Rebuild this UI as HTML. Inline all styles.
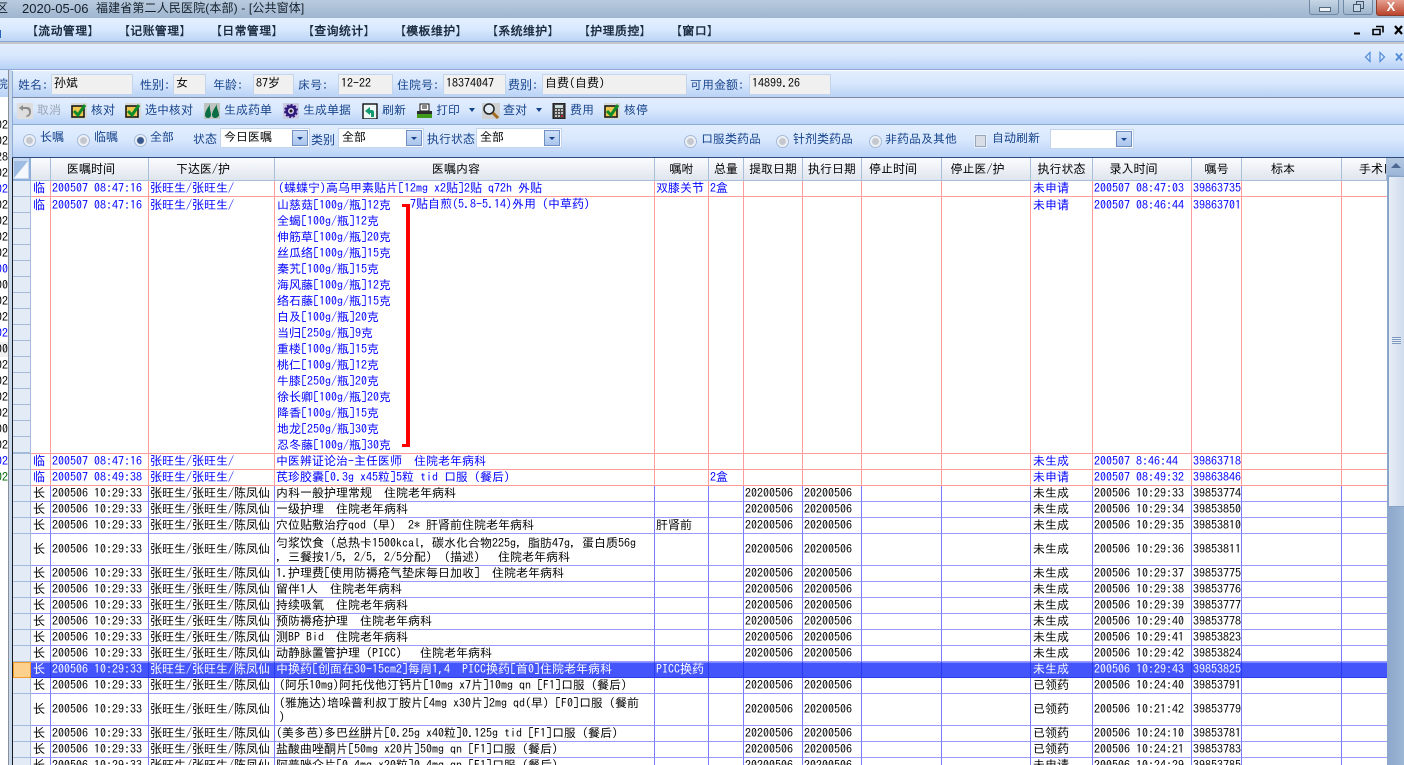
<!DOCTYPE html>
<html lang="zh"><head><meta charset="utf-8"><title>医嘱</title>
<style>
html,body{margin:0;padding:0;width:1404px;height:765px;overflow:hidden;background:#fff}
body{position:relative;font:12px/15px "WenQuanYi Zen Hei Mono","IPAGothic","WenQuanYi Zen Hei","Noto Sans CJK SC",monospace;color:#000}
.a{position:absolute;white-space:pre}
.band{position:absolute;background:linear-gradient(#e2eefe,#d9e8fd 45%,#b8d2f6)}
.l{position:absolute;white-space:pre;color:#15428b;line-height:15px}
.v{position:absolute;top:74px;height:19px;background:#f0f0f0;border:1px solid #c3d5ec;padding-left:2px;line-height:17px;white-space:pre;box-sizing:content-box}
.m{position:absolute;top:24px;white-space:pre;font-weight:bold;color:#1c2c40;letter-spacing:.3px}
.ic{position:absolute;top:103px;width:16px;height:16px}
.dd{position:absolute;top:108px;left:0;width:0;height:0;border:3px solid transparent;border-top:4px solid #15428b;border-bottom:0}
.r{position:absolute;width:11px;height:11px;border:1px solid #a6bad6;border-radius:50%;background:radial-gradient(circle,#c4c8ce 0 3px,#eef2f7 4px)}
.r.on{background:radial-gradient(circle,#37578e 0 3px,#eef2f7 4px)}
.c{position:absolute;height:18px;background:#fff;border:1px solid #c3d6ee;line-height:17px;padding-left:3px;white-space:pre;box-sizing:content-box}
.c i{position:absolute;right:1px;top:1px;width:14px;height:14px;background:linear-gradient(#cfe0f8,#a9c4ec);border:1px solid #6e8fc0}
.c i:after{content:"";position:absolute;left:4px;top:6px;border:3px solid transparent;border-top:3px solid #15428b;border-bottom:0}
table{position:absolute;left:13px;top:158px;width:1374px;table-layout:fixed;border-collapse:separate;border-spacing:0}
td,th{padding:0 0 0 1px;margin:0;box-sizing:border-box;overflow:hidden;white-space:pre;height:16px;line-height:15px;font-weight:normal;text-align:left;vertical-align:middle}
th{height:22px;background:linear-gradient(#fbfcfe,#dfe5ee);border-right:1px solid #a9bfd9;border-bottom:1px solid #a9bfd9;text-align:center;padding:0}
th.s{padding-right:17px}
td.h{background:#e3ebf6;border-right:1px solid #a4bcd9;border-bottom:1px solid #a4bcd9;padding:0}
td.t{padding-left:2px}
.b td{border-right:1px solid #7a7aff;border-bottom:1px solid #9a9aff}
.q td{color:#0000ff;border-right:1px solid #ff9c9c;border-bottom:1px solid #ff9c9c}
.b td.h,.q td.h{border-right:1px solid #a4bcd9;border-bottom:1px solid #a4bcd9;color:#000}
.sel td{background:#4455fb;color:#fff;border-right:1px solid #2a3af0;border-bottom:1px solid #2a3af0;box-shadow:inset 0 1px 0 #7f8cff}
.sel td.h{background:#fdd08c;border:1px solid #f09a30;box-shadow:none}
tr td:last-child{border-right:0 !important}
.two{line-height:14px}
.ln{line-height:16px;vertical-align:top}
.n{position:absolute;left:-6px;width:14px;text-align:right;overflow:hidden;white-space:pre;line-height:14px}
.tt{position:absolute;white-space:pre;top:1px;font-family:'Liberation Sans','WenQuanYi Zen Hei',sans-serif;color:#15202c;font-size:12px;line-height:15px}
</style></head><body>

<!-- title bar -->
<div class="a" style="left:0;top:0;width:1404px;height:18px;background:linear-gradient(#b9cbde,#9fb6cf)"></div>
<div class="tt" style="left:-4px">区</div>
<div class="tt" style="left:22px;font-size:13px">2020-05-06</div>
<div class="tt" style="left:96px;letter-spacing:.14px">福建省第二人民医院(本部) - [公共窗体]</div>
<div class="a" style="left:1309px;top:0;width:28px;height:14px;border:1px solid #6f88a6;border-top:0;border-radius:0 0 3px 3px;background:linear-gradient(#c6d6e6,#9fb5cc)"><div class="a" style="left:9px;top:7px;width:10px;height:3px;background:#eef3f8;border:1px solid #55687e"></div></div>
<div class="a" style="left:1343px;top:0;width:28px;height:14px;border:1px solid #6f88a6;border-top:0;border-radius:0 0 3px 3px;background:linear-gradient(#c6d6e6,#9fb5cc)"><div class="a" style="left:12px;top:1px;width:6px;height:6px;border:1px solid #44566c"></div><div class="a" style="left:9px;top:4px;width:6px;height:6px;border:1px solid #44566c;background:#c6d6e6"></div></div>
<div class="a" style="left:1376px;top:0;width:28px;height:15px;border-left:1px solid #8a3d2c;border-bottom:1px solid #8a3d2c;border-radius:0 0 0 3px;background:linear-gradient(#e6a090,#b9442c);color:#fff;font:bold 13px/13px 'Liberation Sans',sans-serif;text-align:center">X</div>

<!-- menu bar -->
<div class="a" style="left:0;top:18px;width:1404px;height:23px;background:linear-gradient(#e4f0ff,#d8e8fd 50%,#bcd5f6)"></div>
<div class="a" style="left:0;top:41px;width:1404px;height:1px;background:#88a8d2"></div>
<div class="a" style="left:0;top:42px;width:1404px;height:2px;background:#c4c6ca"></div>
<div class="m" style="left:26px">【流动管理】</div>
<div class="m" style="left:118px">【记账管理】</div>
<div class="m" style="left:210px">【日常管理】</div>
<div class="m" style="left:302px">【查询统计】</div>
<div class="m" style="left:394px">【模板维护】</div>
<div class="m" style="left:486px">【系统维护】</div>
<div class="m" style="left:578px">【护理质控】</div>
<div class="m" style="left:670px">【窗口】</div>
<div class="a" style="left:0;top:30px;width:1px;height:8px;background:#2a66b8"></div>
<svg class="a" style="left:1350px;top:24px" width="54" height="14" viewBox="0 0 54 14"><path d="M4 9.500h6" stroke="#000" stroke-width="2"/><path d="M26 2.500h7v6M23 5.500h7v5h-7z" fill="none" stroke="#000" stroke-width="1.600"/><path d="M45 2l7 8M52 2l-7 8" stroke="#000" stroke-width="2.200"/></svg>

<!-- tab band -->
<div class="band" style="left:0;top:44px;width:1404px;height:25px"></div>
<div class="a" style="left:0;top:69px;width:1404px;height:1px;background:#8eaad2"></div>
<svg class="a" style="left:1362px;top:50px" width="42" height="14" viewBox="0 0 42 14"><path d="M8 2.500L3.500 7 8 11.500z" fill="none" stroke="#4f8ad8" stroke-width="1.200"/><path d="M18 2.500L22.500 7 18 11.500z" fill="none" stroke="#4f8ad8" stroke-width="1.200"/><path d="M34 3.500l6 7M40 3.500l-6 7" stroke="#4f8ad8" stroke-width="1.800"/></svg>

<!-- left strip -->
<div class="band" style="left:0;top:70px;width:8px;height:27px"></div>
<div class="a" style="left:0;top:97px;width:8px;height:668px;background:#fff"></div>
<div class="a" style="left:8px;top:70px;width:1px;height:695px;background:#8c8f96"></div>
<div class="a" style="left:9px;top:70px;width:3px;height:695px;background:#c6d8ee"></div>
<div class="a" style="left:12px;top:158px;width:1px;height:607px;background:#1a1a1a"></div>
<div class="l" style="left:-4px;top:77px;width:12px;overflow:hidden;text-align:right">院</div>
<div class="a" style="left:0;top:342px;width:8px;height:15px;background:#f0f0f0"></div>
<div class="n" style="top:118px">02</div><div class="n" style="top:134px">02</div><div class="n" style="top:150px">28</div><div class="n" style="top:166px">02</div><div class="n" style="top:182px;color:#00f">02</div><div class="n" style="top:198px">02</div><div class="n" style="top:214px">02</div><div class="n" style="top:230px">02</div><div class="n" style="top:246px">02</div><div class="n" style="top:262px;color:#00f">00</div><div class="n" style="top:278px">00</div><div class="n" style="top:294px">02</div><div class="n" style="top:310px">02</div><div class="n" style="top:326px;color:#00f">02</div><div class="n" style="top:342px">00</div><div class="n" style="top:358px">02</div><div class="n" style="top:374px">02</div><div class="n" style="top:390px">02</div><div class="n" style="top:406px">02</div><div class="n" style="top:422px">00</div><div class="n" style="top:438px">02</div><div class="n" style="top:454px;color:#00f">02</div><div class="n" style="top:470px;color:#060">02</div>

<!-- patient panel -->
<div class="band" style="left:12px;top:71px;width:1392px;height:26px;border-left:1px solid #8eaad2"></div>
<div class="a" style="left:12px;top:97px;width:1392px;height:1px;background:#7f8a9c"></div>
<div class="l" style="left:18px;top:78px">姓名:</div><div class="v" style="left:51px;width:78px">孙斌</div>
<div class="l" style="left:140px;top:78px">性别:</div><div class="v" style="left:173px;width:29px">女</div>
<div class="l" style="left:213px;top:78px">年龄:</div><div class="v" style="left:253px;width:37px">87岁</div>
<div class="l" style="left:298px;top:78px">床号:</div><div class="v" style="left:338px;width:51px">12-22</div>
<div class="l" style="left:397px;top:78px">住院号:</div><div class="v" style="left:443px;width:59px">18374047</div>
<div class="l" style="left:508px;top:78px">费别:</div><div class="v" style="left:542px;width:141px">自费(自费)</div>
<div class="l" style="left:690px;top:78px">可用金额:</div><div class="v" style="left:749px;width:78px">14899.26</div>

<!-- toolbar -->
<div class="band" style="left:12px;top:98px;width:1392px;height:26px;border-left:1px solid #8eaad2"></div>
<div class="a" style="left:12px;top:124px;width:1392px;height:1px;background:#8eaad2"></div>
<svg class="ic" style="left:17px" viewBox="0 0 16 16"><rect width="16" height="16" fill="#dedede"/><path d="M2 5l4-3v2h4c3 0 4 2 4 5s-2 5-5 5l1-2c2 0 2-2 2-3s-1-3-3-3H6v2z" fill="#8c8c8c"/></svg>
<div class="l" style="left:37px;top:103px;color:#9aa6b6">取消</div>
<svg class="ic" style="left:71px" viewBox="0 0 16 16"><rect width="16" height="16" fill="#d6d8d4"/><rect x="1" y="3" width="12" height="11" fill="#f0c850" stroke="#1a1a1a" stroke-width="1.600"/><path d="M3 8l4 4 7-10" fill="none" stroke="#0f8a28" stroke-width="3"/></svg>
<div class="l" style="left:91px;top:103px">核对</div>
<svg class="ic" style="left:125px" viewBox="0 0 16 16"><rect width="16" height="16" fill="#d6d8d4"/><rect x="1" y="3" width="12" height="11" fill="#f0c850" stroke="#1a1a1a" stroke-width="1.600"/><path d="M3 8l4 4 7-10" fill="none" stroke="#0f8a28" stroke-width="3"/></svg>
<div class="l" style="left:145px;top:103px">选中核对</div>
<svg class="ic" style="left:204px" viewBox="0 0 16 16"><rect width="16" height="16" fill="#bfc4c0"/><path d="M6 1C4 5 1 8 1 12c0 2 2 3 3 3s3-1 3-3c0-4-2-7-1-11zM13 1c-2 4-5 7-5 11 0 2 2 3 3 3s4-1 4-3c0-4-3-7-2-11z" fill="#0a6e44"/></svg>
<div class="l" style="left:224px;top:103px">生成药单</div>
<svg class="ic" style="left:283px" viewBox="0 0 16 16"><rect width="16" height="16" fill="#c9cbe0"/><circle cx="8" cy="8" r="7" fill="#2e1a78"/><circle cx="8" cy="8" r="6.500" fill="none" stroke="#c9bcf0" stroke-width="1.600" stroke-dasharray="2 2"/><circle cx="8" cy="8" r="3" fill="#d8d0f0"/><circle cx="8" cy="8" r="1.500" fill="#222"/></svg>
<div class="l" style="left:303px;top:103px">生成单据</div>
<svg class="ic" style="left:362px" viewBox="0 0 16 16"><rect x="1" y="1" width="14" height="15" fill="#eef8f4" stroke="#111" stroke-width="1.400"/><path d="M12 14V9c0-1-1-2-2-2H8V4L3 8l5 4V10h1v4z" fill="#129a70"/></svg>
<div class="l" style="left:382px;top:103px">刷新</div>
<svg class="ic" style="left:416px" viewBox="0 0 16 16"><rect x="4" y="1" width="9" height="7" fill="#fff" stroke="#111"/><path d="M6 3h5M6 5h5" stroke="#111"/><rect x="1" y="8" width="15" height="6" fill="#2c2c2c"/><rect x="1" y="11" width="15" height="4" fill="#3f9a1c"/></svg>
<div class="l" style="left:436px;top:103px">打印</div>
<div class="dd" style="left:469px"></div>
<svg class="ic" style="left:482px;width:18px" viewBox="0 0 18 16"><rect width="18" height="16" fill="#ced0d2"/><circle cx="7" cy="6" r="5" fill="#dfeaf4" stroke="#222" stroke-width="1.500"/><path d="M11 10l5 5" stroke="#a36a1c" stroke-width="3"/></svg>
<div class="l" style="left:503px;top:103px">查对</div>
<div class="dd" style="left:536px"></div>
<svg class="ic" style="left:551px" viewBox="0 0 16 16"><rect x="2" y="0" width="12" height="16" fill="#444" stroke="#111"/><rect x="4" y="2" width="8" height="3" fill="#cdd"/><path d="M4 7h2M7 7h2M10 7h2M4 10h2M7 10h2M10 10h2M4 13h2M7 13h2" stroke="#eee" stroke-width="1.500"/><path d="M10 13h2" stroke="#d22" stroke-width="1.500"/></svg>
<div class="l" style="left:570px;top:103px">费用</div>
<svg class="ic" style="left:604px" viewBox="0 0 16 16"><rect width="16" height="16" fill="#d6d8d4"/><rect x="1" y="3" width="12" height="11" fill="#f0c850" stroke="#1a1a1a" stroke-width="1.600"/><path d="M3 8l4 4 7-10" fill="none" stroke="#0f8a28" stroke-width="3"/></svg>
<div class="l" style="left:624px;top:103px">核停</div>

<!-- filter -->
<div class="band" style="left:12px;top:125px;width:1392px;height:32px;border-left:1px solid #8eaad2"></div>
<div class="a" style="left:12px;top:157px;width:1392px;height:1px;background:#2c4a7c"></div>
<div class="r" style="left:23px;top:134px"></div><div class="l" style="left:40px;top:130px">长嘱</div>
<div class="r" style="left:77px;top:134px"></div><div class="l" style="left:94px;top:130px">临嘱</div>
<div class="r on" style="left:134px;top:134px"></div><div class="l" style="left:150px;top:130px">全部</div>
<div class="l" style="left:193px;top:132px">状态</div>
<div class="c" style="left:220px;top:128px;width:85px">今日医嘱<i></i></div>
<div class="l" style="left:311px;top:133px">类别</div>
<div class="c" style="left:338px;top:128px;width:81px">全部<i></i></div>
<div class="l" style="left:427px;top:132px">执行状态</div>
<div class="c" style="left:476px;top:128px;width:81px">全部<i></i></div>
<div class="r" style="left:684px;top:135px"></div><div class="l" style="left:701px;top:132px">口服类药品</div>
<div class="r" style="left:776px;top:135px"></div><div class="l" style="left:793px;top:132px">针剂类药品</div>
<div class="r" style="left:869px;top:135px"></div><div class="l" style="left:885px;top:132px">非药品及其他</div>
<div class="a" style="left:975px;top:135px;width:9px;height:10px;border:1px solid #98a8bc;background:#d9dee6;box-shadow:0 0 0 1px #e8f0fb"></div>
<div class="l" style="left:992px;top:131px">自动刷新</div>
<div class="c" style="left:1050px;top:129px;width:79px"><i></i></div>

<!-- grid -->
<table>
<colgroup><col style="width:18px"><col style="width:20px"><col style="width:98px"><col style="width:126px"><col style="width:380px"><col style="width:54px"><col style="width:35px"><col style="width:59px"><col style="width:59px"><col style="width:80px"><col style="width:89px"><col style="width:62px"><col style="width:99px"><col style="width:50px"><col style="width:100px"><col style="width:45px"></colgroup>
<tr style="height:23px"><th style="height:23px;background:#c9daf0;border:1px solid #8fb0d8;border-width:0 2px 2px 0"><svg width="16" height="21" viewBox="0 0 16 21" style="display:block"><path d="M1 20L15 3v17z" fill="#f4f7fb"/><path d="M1 3h14L1 20z" fill="#9fbce2"/></svg></th><th style="height:23px"></th><th class="s">医嘱时间</th><th class="s">下达医/护</th><th class="s">医嘱内容</th><th>嘱咐</th><th>总量</th><th>提取日期</th><th>执行日期</th><th class="s">停止时间</th><th class="s">停止医/护</th><th>执行状态</th><th class="s">录入时间</th><th>嘱号</th><th class="s">标本</th><th style="text-align:left;padding-left:17px">手术日</th></tr>
<tr class="q"><td class="h"></td><td class="t">临</td><td>200507 08:47:16</td><td>张旺生/张旺生/</td><td><span style="margin-left:2px">(蝶蝶宁)高乌甲素贴片[12mg x2贴]2贴 q72h 外贴</span></td><td>双膝关节</td><td>2盒</td><td></td><td></td><td></td><td></td><td class="t">未申请</td><td>200507 08:47:03</td><td>39863735</td><td></td><td></td></tr>
<tr class="q" style="height:256px"><td class="h" style="background:repeating-linear-gradient(#e3ebf6 0 15px,#a4bcd9 15px 16px)"></td><td class="t ln">临</td><td class="ln">200507 08:47:16</td><td class="ln">张旺生/张旺生/</td><td class="ln" style="padding-left:2px">山慈菇[100g/瓶]12克
全蝎[100g/瓶]12克
伸筋草[100g/瓶]20克
丝瓜络[100g/瓶]15克
秦艽[100g/瓶]15克
海风藤[100g/瓶]12克
络石藤[100g/瓶]15克
白及[100g/瓶]20克
当归[250g/瓶]9克
重楼[100g/瓶]15克
桃仁[100g/瓶]12克
牛膝[250g/瓶]20克
徐长卿[100g/瓶]20克
降香[100g/瓶]15克
地龙[250g/瓶]30克
忍冬藤[100g/瓶]30克</td><td></td><td></td><td></td><td></td><td></td><td></td><td class="t ln">未申请</td><td class="ln">200507 08:46:44</td><td class="ln">39863701</td><td></td><td></td></tr>
<tr class="q"><td class="h"></td><td class="t">临</td><td>200507 08:47:16</td><td>张旺生/张旺生/</td><td>中医辨证论治-主任医师  住院老年病科</td><td></td><td></td><td></td><td></td><td></td><td></td><td class="t">未生成</td><td>200507 8:46:44</td><td>39863718</td><td></td><td></td></tr>
<tr class="q"><td class="h"></td><td class="t">临</td><td>200507 08:49:38</td><td>张旺生/张旺生/</td><td>芪珍胶囊[0.3g x45粒]5粒 tid 口服（餐后）</td><td></td><td>2盒</td><td></td><td></td><td></td><td></td><td class="t">未申请</td><td>200507 08:49:32</td><td>39863846</td><td></td><td></td></tr>
<tr class="b"><td class="h"></td><td class="t">长</td><td>200506 10:29:33</td><td>张旺生/张旺生/陈凤仙</td><td>内科一般护理常规  住院老年病科</td><td></td><td></td><td>20200506</td><td>20200506</td><td></td><td></td><td class="t">未生成</td><td>200506 10:29:33</td><td>39853774</td><td></td><td></td></tr>
<tr class="b"><td class="h"></td><td class="t">长</td><td>200506 10:29:33</td><td>张旺生/张旺生/陈凤仙</td><td>一级护理  住院老年病科</td><td></td><td></td><td>20200506</td><td>20200506</td><td></td><td></td><td class="t">未生成</td><td>200506 10:29:34</td><td>39853850</td><td></td><td></td></tr>
<tr class="b"><td class="h"></td><td class="t">长</td><td>200506 10:29:33</td><td>张旺生/张旺生/陈凤仙</td><td>穴位贴敷治疗qod（早） 2* 肝肾前住院老年病科</td><td>肝肾前</td><td></td><td>20200506</td><td>20200506</td><td></td><td></td><td class="t">未生成</td><td>200506 10:29:35</td><td>39853810</td><td></td><td></td></tr>
<tr class="b" style="height:32px"><td class="h"></td><td class="t">长</td><td>200506 10:29:33</td><td>张旺生/张旺生/陈凤仙</td><td class="two">匀浆饮食（总热卡1500kcal，碳水化合物225g，脂肪47g，蛋白质56g
，三餐按1/5，2/5，2/5分配）（描述）  住院老年病科</td><td></td><td></td><td>20200506</td><td>20200506</td><td></td><td></td><td class="t">未生成</td><td>200506 10:29:36</td><td>39853811</td><td></td><td></td></tr>
<tr class="b"><td class="h"></td><td class="t">长</td><td>200506 10:29:33</td><td>张旺生/张旺生/陈凤仙</td><td>1.护理费[使用防褥疮气垫床每日加收]  住院老年病科</td><td></td><td></td><td>20200506</td><td>20200506</td><td></td><td></td><td class="t">未生成</td><td>200506 10:29:37</td><td>39853775</td><td></td><td></td></tr>
<tr class="b"><td class="h"></td><td class="t">长</td><td>200506 10:29:33</td><td>张旺生/张旺生/陈凤仙</td><td>留伴1人  住院老年病科</td><td></td><td></td><td>20200506</td><td>20200506</td><td></td><td></td><td class="t">未生成</td><td>200506 10:29:38</td><td>39853776</td><td></td><td></td></tr>
<tr class="b"><td class="h"></td><td class="t">长</td><td>200506 10:29:33</td><td>张旺生/张旺生/陈凤仙</td><td>持续吸氧  住院老年病科</td><td></td><td></td><td>20200506</td><td>20200506</td><td></td><td></td><td class="t">未生成</td><td>200506 10:29:39</td><td>39853777</td><td></td><td></td></tr>
<tr class="b"><td class="h"></td><td class="t">长</td><td>200506 10:29:33</td><td>张旺生/张旺生/陈凤仙</td><td>预防褥疮护理  住院老年病科</td><td></td><td></td><td>20200506</td><td>20200506</td><td></td><td></td><td class="t">未生成</td><td>200506 10:29:40</td><td>39853778</td><td></td><td></td></tr>
<tr class="b"><td class="h"></td><td class="t">长</td><td>200506 10:29:33</td><td>张旺生/张旺生/陈凤仙</td><td>测BP Bid  住院老年病科</td><td></td><td></td><td>20200506</td><td>20200506</td><td></td><td></td><td class="t">未生成</td><td>200506 10:29:41</td><td>39853823</td><td></td><td></td></tr>
<tr class="b"><td class="h"></td><td class="t">长</td><td>200506 10:29:33</td><td>张旺生/张旺生/陈凤仙</td><td>动静脉置管护理（PICC）  住院老年病科</td><td></td><td></td><td>20200506</td><td>20200506</td><td></td><td></td><td class="t">未生成</td><td>200506 10:29:42</td><td>39853824</td><td></td><td></td></tr>
<tr class="sel"><td class="h"></td><td class="t">长</td><td>200506 10:29:33</td><td>张旺生/张旺生/陈凤仙</td><td>中换药[创面在30-15cm2]每周1,4  PICC换药[首0]住院老年病科</td><td>PICC换药</td><td></td><td></td><td></td><td></td><td></td><td class="t">未生成</td><td>200506 10:29:43</td><td>39853825</td><td></td><td></td></tr>
<tr class="b"><td class="h"></td><td class="t">长</td><td>200506 10:29:33</td><td>张旺生/张旺生/陈凤仙</td><td><span style="margin-left:3px">(阿乐10mg)阿托伐他汀钙片[10mg x7片]10mg qn [F1]口服（餐后）</span></td><td></td><td></td><td>20200506</td><td>20200506</td><td></td><td></td><td class="t">已领药</td><td>200506 10:24:40</td><td>39853791</td><td></td><td></td></tr>
<tr class="b" style="height:32px"><td class="h"></td><td class="t">长</td><td>200506 10:29:33</td><td>张旺生/张旺生/陈凤仙</td><td class="two"><span style="margin-left:3px">(雅施达)培哚普利叔丁胺片[4mg x30片]2mg qd(早) [F0]口服（餐前</span>
<span style="margin-left:3px">)</span></td><td></td><td></td><td>20200506</td><td>20200506</td><td></td><td></td><td class="t">已领药</td><td>200506 10:21:42</td><td>39853779</td><td></td><td></td></tr>
<tr class="b"><td class="h"></td><td class="t">长</td><td>200506 10:29:33</td><td>张旺生/张旺生/陈凤仙</td><td>(美多芭)多巴丝肼片[0.25g x40粒]0.125g tid [F1]口服（餐后）</td><td></td><td></td><td>20200506</td><td>20200506</td><td></td><td></td><td class="t">已领药</td><td>200506 10:24:10</td><td>39853781</td><td></td><td></td></tr>
<tr class="b"><td class="h"></td><td class="t">长</td><td>200506 10:29:33</td><td>张旺生/张旺生/陈凤仙</td><td>盐酸曲唑酮片[50mg x20片]50mg qn [F1]口服（餐后）</td><td></td><td></td><td>20200506</td><td>20200506</td><td></td><td></td><td class="t">已领药</td><td>200506 10:24:21</td><td>39853783</td><td></td><td></td></tr>
<tr class="b"><td class="h"></td><td class="t">长</td><td>200506 10:29:33</td><td>张旺生/张旺生/陈凤仙</td><td>阿普唑仑片[0.4mg x20粒]0.4mg qn [F1]口服（餐后）</td><td></td><td></td><td>20200506</td><td>20200506</td><td></td><td></td><td class="t">未申请</td><td>200506 10:24:29</td><td>39853785</td><td></td><td></td></tr>
</table>

<!-- red bracket -->
<div class="a" style="left:406px;top:204px;width:4px;height:243px;background:#f00"></div>
<div class="a" style="left:402px;top:204px;width:8px;height:3px;background:#f00"></div>
<div class="a" style="left:402px;top:444px;width:8px;height:3px;background:#f00"></div>
<div class="a" style="left:410px;top:197px;color:#00f">7贴自煎(5.8-5.14)外用（中草药）</div>

<!-- scrollbar -->
<div class="a" style="left:1387px;top:158px;width:17px;height:607px;background:linear-gradient(90deg,#8ca7cb,#9db6d6)"></div>
<div class="a" style="left:1387px;top:158px;width:17px;height:17px;background:linear-gradient(#b6c9e2,#9cb6d8)"></div>
<div class="a" style="left:1391px;top:163px;border:5px solid transparent;border-bottom:5px solid #4c6890;border-top:0"></div>
<div class="a" style="left:1388px;top:176px;width:15px;height:329px;background:linear-gradient(90deg,#e6edf6,#d0dcec);border:1px solid #8aa4c8;border-width:1px 0 1px 1px"></div>
<div class="a" style="left:1392px;top:337px;width:9px;height:7px;background:repeating-linear-gradient(#7d98bd 0 1px,#e6edf6 1px 2px)"></div>
</body></html>
